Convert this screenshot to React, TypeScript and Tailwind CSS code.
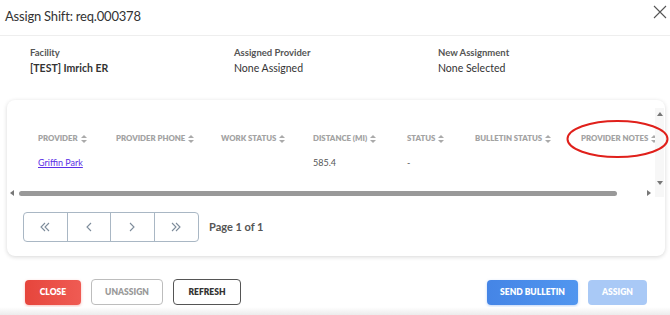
import React from "react";

const SortIcon = () => (
  <svg width="6" height="8" viewBox="0 0 6 8" className="ml-[3px] inline-block shrink-0">
    <path d="M3 0 L6 3 L0 3 Z" fill="#aaaaaa" />
    <path d="M3 8 L6 5 L0 5 Z" fill="#aaaaaa" />
  </svg>
);

const cols = [
  { label: "PROVIDER", w: "w-[78px]" },
  { label: "PROVIDER PHONE", w: "w-[105px]" },
  { label: "WORK STATUS", w: "w-[92px]" },
  { label: "DISTANCE (MI)", w: "w-[94px]" },
  { label: "STATUS", w: "w-[68px]" },
  { label: "BULLETIN STATUS", w: "w-[106px]" },
  { label: "PROVIDER NOTES", w: "w-auto" },
];

const Chev = ({ d }: { d: string }) => (
  <svg width="14" height="12" viewBox="0 0 14 12" fill="none" stroke="#7d8c9b" strokeWidth="1.1">
    <path d={d} />
  </svg>
);

export default function App() {
  return (
    <div className="relative w-[670px] h-[315px] overflow-hidden bg-white text-[#333]" style={{ fontFamily: "Lato, 'Open Sans', sans-serif" }}>
      {/* Header */}
      <div className="h-[36px] flex items-center justify-between pl-[5px] pr-[3px] border-b border-[#eeeeee]">
        <div className="text-[13px] leading-none text-[#333] tracking-[-0.2px] -mt-[2px]">Assign Shift: req.000378</div>
        <svg width="14" height="14" viewBox="0 0 14 14" className="-mt-[12px]" stroke="#555" strokeWidth="1.1">
          <path d="M1 1 L13 13 M13 1 L1 13" />
        </svg>
      </div>

      {/* Info */}
      <div className="flex pl-[30px] pt-[11px]">
        <div className="w-[204px]">
          <div className="text-[9.5px] font-bold text-[#555] leading-[12px]">Facility</div>
          <div className="text-[10.5px] font-bold text-[#333] leading-[16px] mt-[1px]">[TEST] Imrich ER</div>
        </div>
        <div className="w-[204px]">
          <div className="text-[9.5px] font-bold text-[#555] leading-[12px]">Assigned Provider</div>
          <div className="text-[10.5px] text-[#333] leading-[16px] mt-[1px]">None Assigned</div>
        </div>
        <div className="w-[204px]">
          <div className="text-[9.5px] font-bold text-[#555] leading-[12px]">New Assignment</div>
          <div className="text-[10.5px] text-[#333] leading-[16px] mt-[1px]">None Selected</div>
        </div>
      </div>

      {/* Card */}
      <div className="ml-[7px] mr-[5px] mt-[24px] h-[156px] rounded-[8px] bg-white shadow-[0_1px_4px_rgba(0,0,0,0.16)] flex flex-col">
        <div className="relative mt-[8px] h-[89px] flex">
          <div className="flex-1 min-w-0 flex flex-col">
            <div className="flex-1 pl-[31px] pt-[25px]">
              <div className="flex items-center h-[12px] text-[7.8px] font-extrabold text-[#a3a3a3] whitespace-nowrap">
                {cols.map((c) => (
                  <div key={c.label} className={`${c.w} shrink-0 flex items-center`}>
                    {c.label}
                    <SortIcon />
                  </div>
                ))}
              </div>
              <div className="flex items-center h-[12px] mt-[12px] text-[9px] text-[#555] whitespace-nowrap">
                <div className="w-[78px] shrink-0 text-[#5b2fe6] underline">Griffin Park</div>
                <div className="w-[105px] shrink-0" />
                <div className="w-[92px] shrink-0" />
                <div className="w-[94px] shrink-0">585.4</div>
                <div className="w-[68px] shrink-0">-</div>
              </div>
            </div>
            {/* horizontal scrollbar */}
            <div className="h-[10px] flex items-center pl-[3px] pr-[4px] translate-y-[1px]">
              <svg width="4" height="6" viewBox="0 0 4 6"><path d="M4 0 L0 3 L4 6 Z" fill="#777" /></svg>
              <div className="ml-[5px] w-[598px] h-[5px] rounded-full bg-[#999999]" />
              <div className="flex-1" />
              <svg width="4" height="6" viewBox="0 0 4 6"><path d="M0 0 L4 3 L0 6 Z" fill="#777" /></svg>
            </div>
          </div>
          {/* vertical scrollbar */}
          <div className="w-[9px] shrink-0 bg-[#f7f7f7] flex flex-col items-center justify-between pt-[4px] pb-[12px] mr-[1px]">
            <svg width="6" height="4" viewBox="0 0 6 4"><path d="M3 0 L6 4 L0 4 Z" fill="#777" /></svg>
            <svg width="6" height="4" viewBox="0 0 6 4"><path d="M0 0 L6 0 L3 4 Z" fill="#777" /></svg>
          </div>
          {/* red annotation ellipse */}
          <svg className="absolute left-[559px] top-[11px]" width="103" height="40" viewBox="0 0 103 40">
            <ellipse cx="51.5" cy="20" rx="50" ry="18" fill="none" stroke="#e0201b" strokeWidth="2" />
          </svg>
        </div>

        {/* pagination */}
        <div className="flex items-center pl-[16px] mt-[15px]">
          <div className="flex h-[30px] border border-[#a9b7c4] rounded-[4px]">
            {["M7 2 L3 6 L7 10 M11 2 L7 6 L11 10", "M9 2 L5 6 L9 10", "M5 2 L9 6 L5 10", "M3 2 L7 6 L3 10 M7 2 L11 6 L7 10"].map((d, i) => (
              <div key={i} className={`w-[43.5px] flex items-center justify-center ${i < 3 ? "border-r border-[#a9b7c4]" : ""}`}>
                <Chev d={d} />
              </div>
            ))}
          </div>
          <div className="ml-[10px] text-[11px] font-bold text-[#555]">Page 1 of 1</div>
        </div>
      </div>

      {/* footer buttons */}
      <div className="flex items-center px-[25px] mt-[23px]">
        <div className="w-[56px] h-[25px] rounded-[4px] bg-gradient-to-r from-[#e6453c] to-[#ef5b53] text-white text-[8.5px] font-extrabold flex items-center justify-center shadow-[0_1px_3px_rgba(230,69,60,0.35)]">CLOSE</div>
        <div className="ml-[10px] w-[72px] h-[26px] rounded-[4px] border border-[#bdbdbd] text-[#9a9a9a] text-[8.5px] font-extrabold flex items-center justify-center">UNASSIGN</div>
        <div className="ml-[10px] w-[68px] h-[26px] rounded-[4px] border border-[#555] text-[#333] text-[8.5px] font-extrabold flex items-center justify-center">REFRESH</div>
        <div className="flex-1" />
        <div className="w-[91px] h-[25px] rounded-[4px] bg-gradient-to-r from-[#4585e6] to-[#5196ef] text-white text-[8.5px] font-extrabold flex items-center justify-center shadow-[0_1px_3px_rgba(69,133,230,0.35)]">SEND BULLETIN</div>
        <div className="ml-[10px] mr-[-2px] w-[59px] h-[25px] rounded-[4px] bg-[#a9c9f6] text-white text-[8.5px] font-extrabold flex items-center justify-center">ASSIGN</div>
      </div>

      <div className="absolute left-0 right-0 bottom-0 h-[8px] bg-gradient-to-b from-white to-[#ececec]" />
    </div>
  );
}
